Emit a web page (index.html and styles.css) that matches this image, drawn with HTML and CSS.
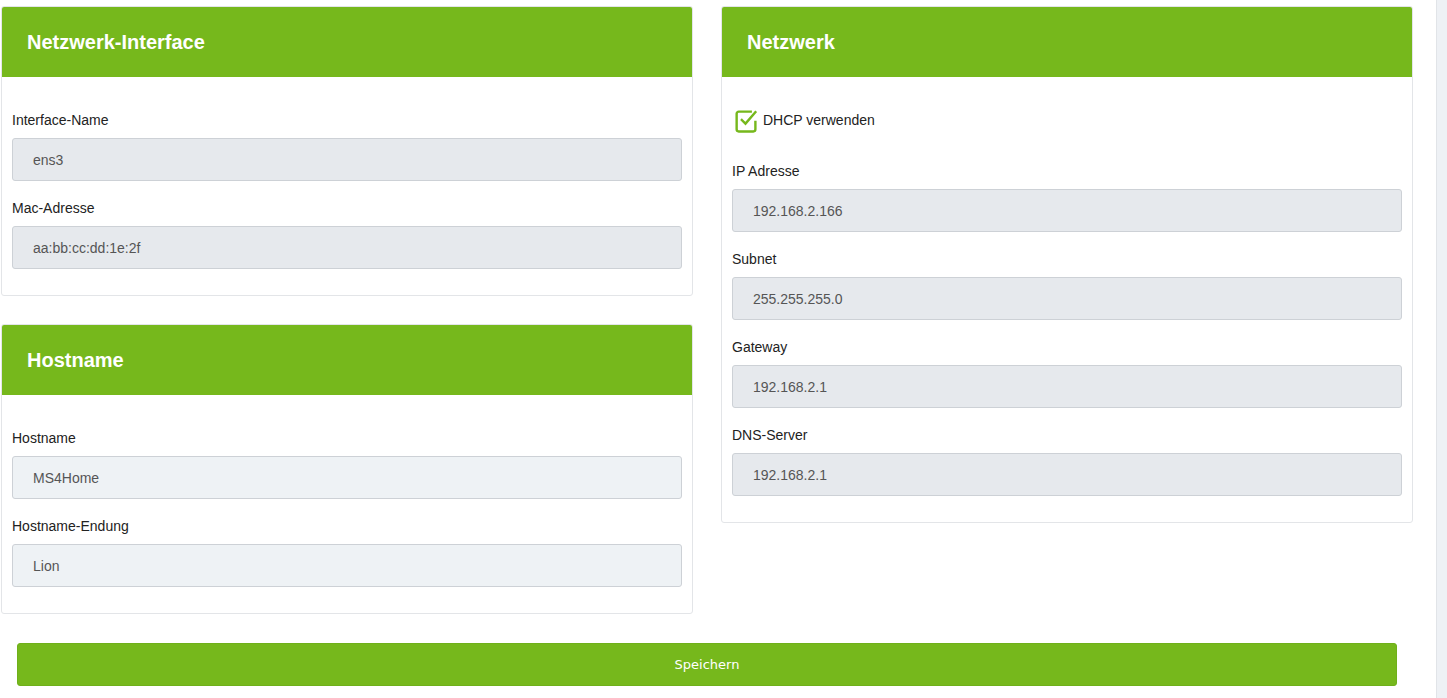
FILE: index.html
```html
<!DOCTYPE html>
<html lang="de">
<head>
    <meta charset="UTF-8">
    <title>Netzwerk</title>
    <link rel="stylesheet" href="styles.css">
</head>
<body>
    <div class="page">
        <div class="content">
            <div class="columns">
                <div class="column">
                    <div class="card">
                        <div class="card-header">Netzwerk-Interface</div>
                        <div class="card-body">
                            <div class="field">
                                <label>Interface-Name</label>
                                <input type="text" value="ens3" disabled>
                            </div>
                            <div class="field">
                                <label>Mac-Adresse</label>
                                <input type="text" value="aa:bb:cc:dd:1e:2f" disabled>
                            </div>
                        </div>
                    </div>
                    <div class="card">
                        <div class="card-header">Hostname</div>
                        <div class="card-body">
                            <div class="field">
                                <label>Hostname</label>
                                <input type="text" value="MS4Home" class="editable">
                            </div>
                            <div class="field">
                                <label>Hostname-Endung</label>
                                <input type="text" value="Lion" class="editable">
                            </div>
                        </div>
                    </div>
                </div>
                <div class="column">
                    <div class="card">
                        <div class="card-header">Netzwerk</div>
                        <div class="card-body">
                            <div class="check">
                                <svg width="25" height="25" viewBox="0 0 24 24" fill="none" stroke="#76b81c" stroke-width="2.3" stroke-linecap="square">
                                    <path d="M17 3.5H5.5a2 2 0 0 0-2 2v15a2 2 0 0 0 2 2h14a2 2 0 0 0 2-2v-7"/>
                                    <path d="M8.5 11.5l3.5 3.5 9.5-11"/>
                                </svg>
                                <span>DHCP verwenden</span>
                            </div>
                            <div class="field">
                                <label>IP Adresse</label>
                                <input type="text" value="192.168.2.166" disabled>
                            </div>
                            <div class="field">
                                <label>Subnet</label>
                                <input type="text" value="255.255.255.0" disabled>
                            </div>
                            <div class="field">
                                <label>Gateway</label>
                                <input type="text" value="192.168.2.1" disabled>
                            </div>
                            <div class="field">
                                <label>DNS-Server</label>
                                <input type="text" value="192.168.2.1" disabled>
                            </div>
                        </div>
                    </div>
                </div>
            </div>
            <div class="actions">
                <button>Speichern</button>
            </div>
        </div>
        <div class="sidebar"></div>
    </div>
</body>
</html>
```

FILE: styles.css
```css
body {
    margin: 0;
    font-family: "Liberation Sans", Arial, sans-serif;
    font-size: 14px;
    color: #222;
    background: #fff;
}
.page {
    display: flex;
    height: 698px;
    overflow: hidden;
}
.content {
    width: 1412px;
    padding: 6px 0 0 1px;
}
.sidebar {
    margin-left: 23px;
    flex: 1;
    background: #eef1f5;
    border-left: 1px solid #e1e4e8;
}
.columns {
    display: flex;
    gap: 28px;
    align-items: flex-start;
}
.column {
    width: 692px;
    display: flex;
    flex-direction: column;
    gap: 28px;
}
.card {
    border: 1px solid #e3e5e8;
    border-radius: 3px;
    background: #fff;
}
.card-header {
    background: #76b81c;
    color: #fff;
    font-size: 20px;
    font-weight: bold;
    height: 70px;
    line-height: 70px;
    padding-left: 25px;
    border-radius: 2px 2px 0 0;
}
.card-body {
    padding: 24px 10px 26px;
}
.field label {
    display: block;
    line-height: 16px;
    margin: 11px 0 10px;
}
.field + .field label {
    margin-top: 19px;
}
.field input {
    display: block;
    box-sizing: border-box;
    width: 100%;
    height: 43px;
    margin: 0;
    padding: 0 20px;
    font-family: inherit;
    font-size: 14px;
    color: #555;
    background: #e6e9ed;
    border: 1px solid #cdd1d6;
    border-radius: 3px;
    -webkit-text-fill-color: #555;
    opacity: 1;
}
.field input.editable {
    background: #eef2f5;
}
.check {
    display: flex;
    align-items: center;
    gap: 5px;
    margin: 6px 0 30px 1px;
    line-height: 25px;
}
.check span {
    margin-top: 1px;
}
.actions {
    padding: 29px 16px 0;
}
button {
    display: block;
    width: 100%;
    height: 43px;
    border: 1px solid #6fb01a;
    border-radius: 3px;
    background: #76b81c;
    color: #fff;
    font-family: "DejaVu Sans", sans-serif;
    font-size: 13px;
    cursor: pointer;
}
```
